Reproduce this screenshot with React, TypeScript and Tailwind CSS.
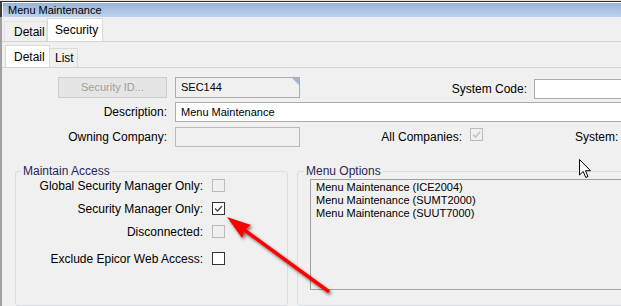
import React from 'react';

function CheckBox({ checked = false, disabled = false }: { checked?: boolean; disabled?: boolean }) {
  const border = disabled ? 'border-[#bcbcbc] bg-[#f0f0f0]' : 'border-[#333333] bg-white';
  const stroke = disabled ? '#bcbcbc' : '#444444';
  return (
    <div className={`flex h-[13px] w-[13px] shrink-0 items-center justify-center border ${border}`}>
      {checked && (
        <svg width="11" height="11" viewBox="0 0 11 11">
          <polyline points="2,5.5 4.5,8 9,3" fill="none" stroke={stroke} strokeWidth="1.3" />
        </svg>
      )}
    </div>
  );
}

function CheckRow({ label, checked, disabled, mt }: { label: string; checked?: boolean; disabled?: boolean; mt: string }) {
  return (
    <div className={`flex h-[13px] items-center ${mt}`}>
      <div className="w-[187px] shrink-0 text-right leading-[14px]">{label}</div>
      <div className="ml-[9px]">
        <CheckBox checked={checked} disabled={disabled} />
      </div>
    </div>
  );
}

export default function App() {
  return (
    <div className="relative h-[306px] w-[621px] overflow-hidden bg-[#f0f0f0] font-['Liberation_Sans',Arial,sans-serif] text-[12px] text-black">
      {/* window caption */}
      <div className="h-px bg-[#e6e6e6]" />
      <div className="h-px bg-[#2e2e2e]" />
      <div className="flex h-[15px]">
        <div className="w-[2px] shrink-0 bg-[#3c3c3c]" />
        <div className="w-px shrink-0 bg-white" />
        <div className="min-w-0 flex-1 border-t border-white bg-linear-to-b from-[#97b3d6] to-[#bcd4ee] pl-[5px] text-[11px] leading-[14px]">
          Menu Maintenance
        </div>
      </div>

      <div className="flex h-[289px]">
        <div className="w-[2px] shrink-0 bg-[#a0a0a0]" />
        <div className="flex min-w-0 flex-1 flex-col">
          {/* outer tabs */}
          <div className="flex h-[25px] items-end border-b border-[#d4d4d4]">
            <div className="ml-[2px] flex h-[20px] w-[43px] items-center border border-b-0 border-[#e3e3e3] pl-[9px]">
              Detail
            </div>
            <div className="flex h-[23px] w-[56px] items-center border border-b-0 border-[#d9d9d9] bg-white pl-[7px]">
              Security
            </div>
          </div>

          {/* inner tabs */}
          <div className="mt-[2px] flex h-[24px] items-end border-b border-[#d4d4d4]">
            <div className="ml-[3px] flex h-[22px] w-[45px] items-center border border-b-0 border-[#d9d9d9] bg-white pl-[8px]">
              Detail
            </div>
            <div className="flex h-[19px] w-[28px] items-center border border-b-0 border-l-0 border-[#d9d9d9] pl-[5px]">
              List
            </div>
          </div>

          {/* row 1 */}
          <div className="mt-[9px] flex h-[21px] items-start">
            <div className="flex w-[165px] shrink-0 justify-end">
              <div className="flex h-[21px] w-[109px] items-center justify-center border border-[#cccccc] bg-[#e5e5e5] text-[11px] text-[#a0a0a0]">
                Security ID...
              </div>
            </div>
            <div className="relative ml-[8px] flex h-[21px] w-[125px] shrink-0 items-center border border-[#acacac] bg-[#f0f0f0] pl-[5px] text-[11px]">
              SEC144
              <svg className="absolute right-0 top-0" width="7" height="7" viewBox="0 0 7 7">
                <polygon points="0,0 7,0 7,7" fill="#9fb8d9" />
              </svg>
            </div>
            <div className="flex h-[21px] w-[227px] shrink-0 items-center justify-end pt-[2px]">System Code:</div>
            <div className="ml-[7px] mt-[2px] h-[20px] w-[100px] shrink-0 border border-[#acacac] bg-white" />
          </div>

          {/* row 2 */}
          <div className="mt-[4px] flex h-[20px] items-center">
            <div className="w-[165px] shrink-0 text-right">Description:</div>
            <div className="ml-[8px] flex h-[20px] w-[460px] shrink-0 items-center border border-[#acacac] bg-white pl-[5px] text-[11px]">
              Menu Maintenance
            </div>
          </div>

          {/* row 3 */}
          <div className="mt-[5px] flex h-[20px] items-center">
            <div className="w-[165px] shrink-0 text-right">Owning Company:</div>
            <div className="ml-[8px] h-[20px] w-[125px] shrink-0 border border-[#b9b9b9] bg-[#f0f0f0]" />
            <div className="w-[162px] shrink-0 text-right">All Companies:</div>
            <div className="ml-[8px] mt-[1px] self-start">
              <CheckBox checked disabled />
            </div>
            <div className="ml-[92px] shrink-0">System:</div>
          </div>

          {/* group boxes */}
          <div className="mt-[17px] flex">
            <fieldset className="ml-[13px] h-[142px] w-[273px] shrink-0 rounded-[3px] border border-[#d5dfe5]">
              <legend className="ml-[5px] px-[2px] leading-[14px] text-[#2c2455]">Maintain Access</legend>
              <CheckRow label="Global Security Manager Only:" disabled mt="mt-[1px]" />
              <CheckRow label="Security Manager Only:" checked mt="mt-[10px]" />
              <CheckRow label="Disconnected:" disabled mt="mt-[10px]" />
              <CheckRow label="Exclude Epicor Web Access:" mt="mt-[14px]" />
            </fieldset>
            <fieldset className="ml-[9px] h-[142px] w-[340px] shrink-0 rounded-[3px] border border-[#d5dfe5]">
              <legend className="ml-[6px] px-[2px] leading-[14px] text-[#2c2455]">Menu Options</legend>
              <div className="ml-[12px] mt-[1px] h-[111px] w-[330px] border border-[#a0a0a0] pl-[5px] pt-[1px] text-[11px] leading-[13px]">
                <div>Menu Maintenance (ICE2004)</div>
                <div>Menu Maintenance (SUMT2000)</div>
                <div>Menu Maintenance (SUUT7000)</div>
              </div>
            </fieldset>
          </div>
        </div>
      </div>

      {/* red annotation arrow */}
      <svg className="pointer-events-none absolute left-0 top-0" width="621" height="306" viewBox="0 0 621 306">
        <defs>
          <filter id="sh" x="-20%" y="-20%" width="140%" height="140%">
            <feDropShadow dx="1.5" dy="2" stdDeviation="1.5" floodColor="#000" floodOpacity="0.55" />
          </filter>
        </defs>
        <g filter="url(#sh)">
          <line x1="328" y1="291" x2="243" y2="229" stroke="#ff0000" strokeWidth="3.5" strokeLinecap="round" />
          <polygon points="227,217 251,225 245,230 242,238" fill="#ff0000" />
        </g>
      </svg>

      {/* mouse cursor */}
      <svg className="pointer-events-none absolute left-[579px] top-[159px]" width="13" height="20" viewBox="0 0 13 20">
        <path d="M0.5 0.5 L0.5 16 L4.2 12.5 L6.8 18.5 L9 17.5 L6.5 11.7 L11.5 11.7 Z" fill="#ffffff" stroke="#000000" strokeWidth="1" strokeLinejoin="round" />
      </svg>
    </div>
  );
}
